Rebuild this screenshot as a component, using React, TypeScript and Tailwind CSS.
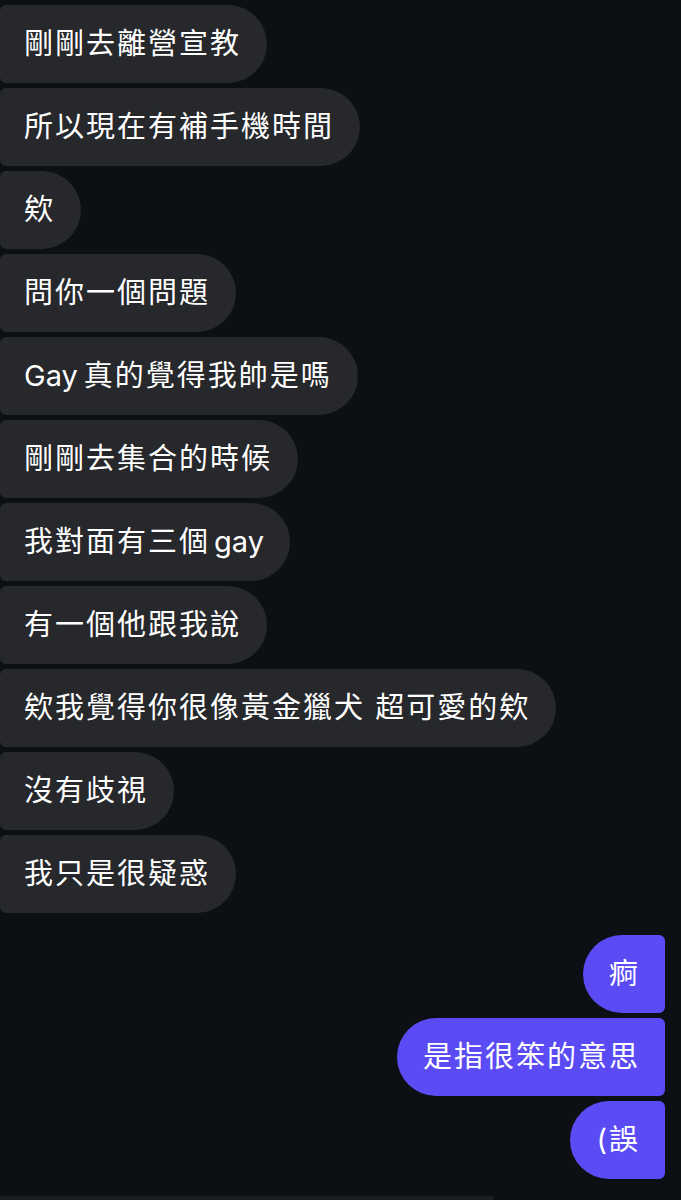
import React from "react";

const L = ({ children, cls }: { children: React.ReactNode; cls: string }) => (
  <span className={"tracking-normal " + cls}>{children}</span>
);

const left: React.ReactNode[] = [
  "剛剛去離營宣教",
  "所以現在有補手機時間",
  "欸",
  "問你一個問題",
  <>
    <L cls="mr-[6px]">Gay</L>真的覺得我帥是嗎
  </>,
  "剛剛去集合的時候",
  <>
    我對面有三個<L cls="ml-[4px]">gay</L>
  </>,
  "有一個他跟我說",
  "欸我覺得你很像黃金獵犬 超可愛的欸",
  "沒有歧視",
  "我只是很疑惑",
];

const right = ["痾", "是指很笨的意思", "(誤"];

export default function App() {
  return (
    <div
      className="w-[681px] h-[1200px] overflow-hidden bg-[#0c0f13] text-white flex flex-col"
      style={{ fontFamily: 'Inter, "Noto Sans CJK TC", sans-serif' }}
    >
      <div className="flex flex-col items-start gap-[5px] pt-[5px]">
        {left.map((t, i) => (
          <div
            key={i}
            className="h-[78px] flex items-center pl-[24px] pr-[26px] bg-[#26282c] rounded-l-[6px] rounded-r-[39px] text-[29px] tracking-[2px] whitespace-pre"
          >
            <span>{t}</span>
          </div>
        ))}
      </div>
      <div className="flex flex-col items-end gap-[5px] pt-[22px] pr-[16px]">
        {right.map((t, i) => (
          <div
            key={i}
            className="h-[78px] flex items-center pl-[26px] pr-[25px] bg-[#5b4bf5] rounded-r-[6px] rounded-l-[39px] text-[29px] tracking-[2px] whitespace-pre"
          >
            {t}
          </div>
        ))}
      </div>
      <div className="mt-[17px] w-[494px] h-[40px] bg-[#1b1d20] rounded-r-[20px] rounded-l-[6px]" />
    </div>
  );
}
